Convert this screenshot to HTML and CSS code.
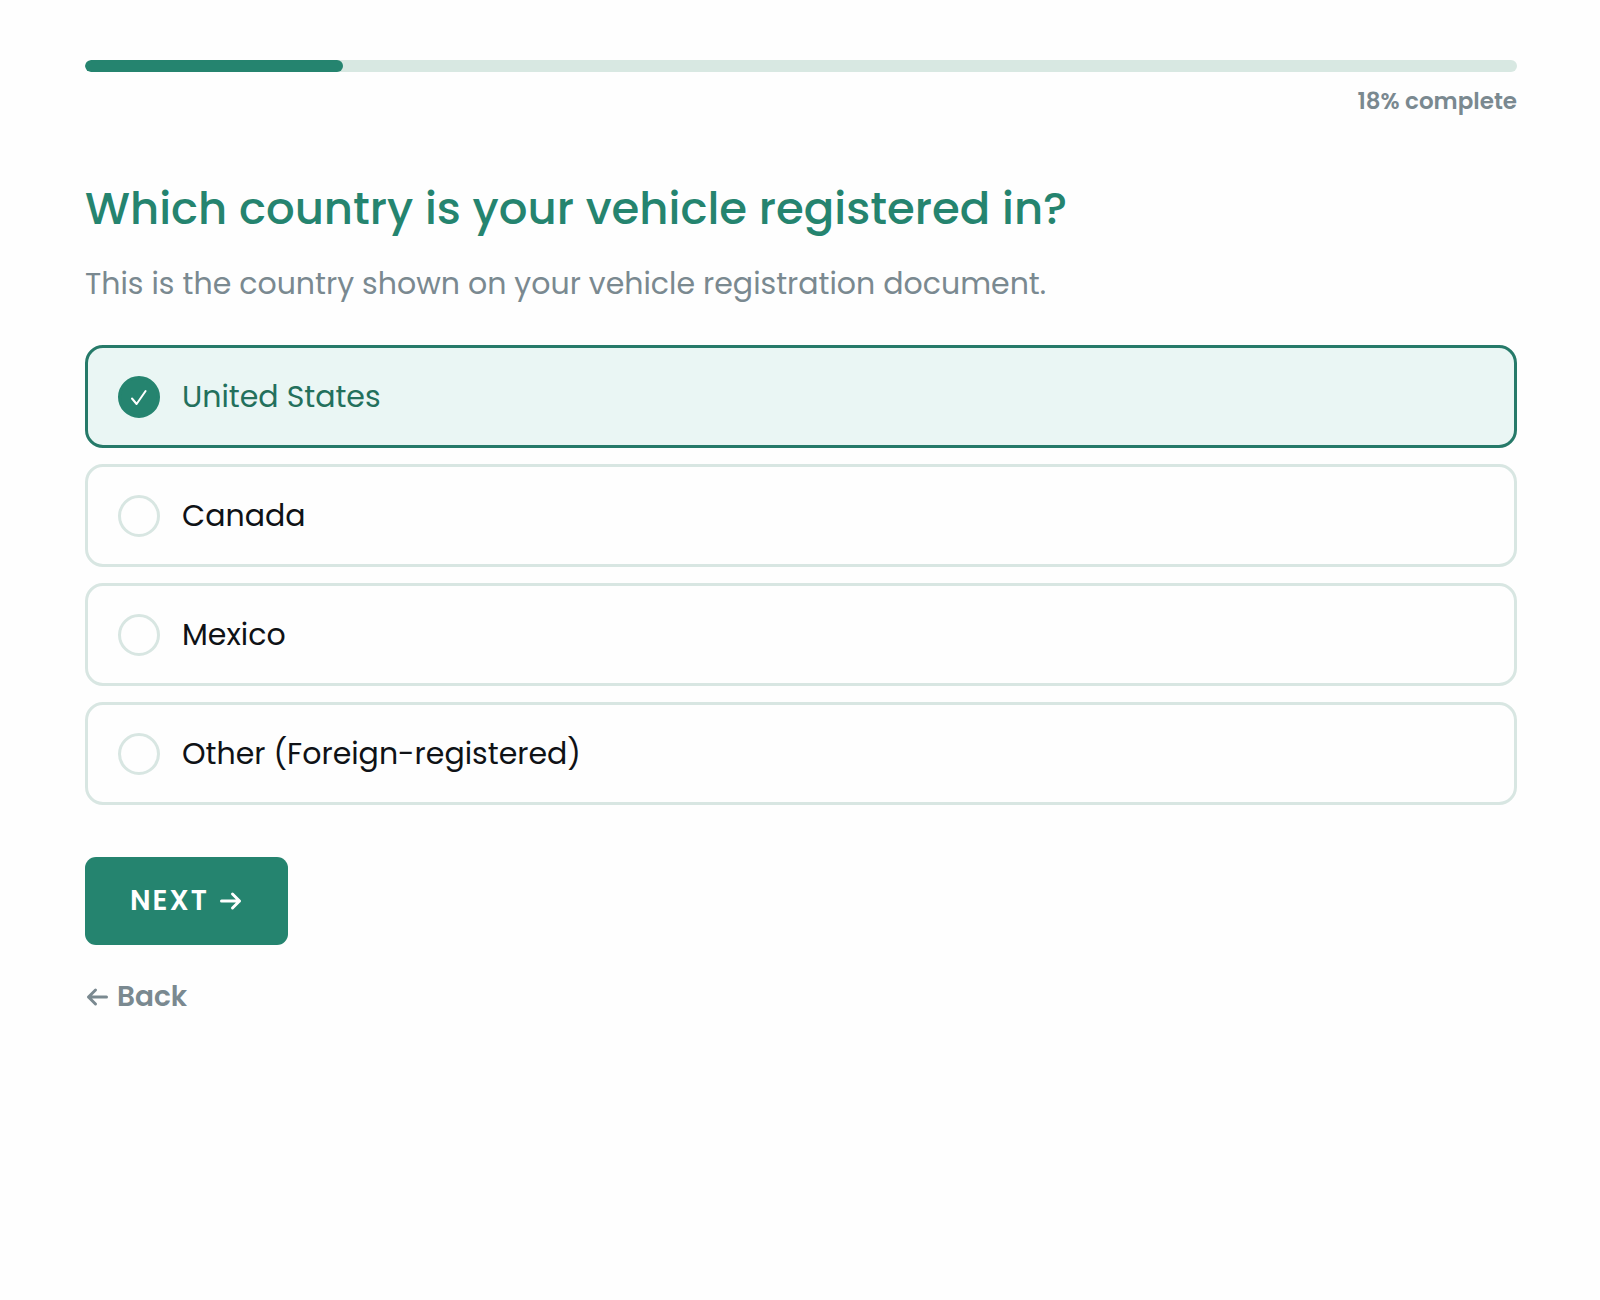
FILE: index.html
```html
<!DOCTYPE html>
<html lang="en">

<head>
    <meta charset="UTF-8">
    <meta name="viewport" content="width=device-width, initial-scale=1.0">
    <title>Vehicle registration</title>
    <link rel="stylesheet" href="styles.css">
</head>

<body>
    <form class="quiz" action="" autocomplete="off">
        <div class="progress">
            <div class="progress-bar" style="width: 18%"></div>
        </div>
        <p class="progress-text">18% complete</p>

        <h1 id="question">Which country is your vehicle registered in?</h1>
        <p class="hint">This is the country shown on your vehicle registration document.</p>

        <div class="options" role="radiogroup" aria-labelledby="question">
            <label class="option">
                <span class="radio">
                    <input type="radio" name="country" value="us" checked>
                    <svg class="check" viewBox="0 0 42 42"><path d="M14 22.500l4.600 5.500 9-13"/></svg>
                </span>
                <span>United States</span>
            </label>
            <label class="option">
                <span class="radio">
                    <input type="radio" name="country" value="ca">
                    <svg class="check" viewBox="0 0 42 42"><path d="M14 22.500l4.600 5.500 9-13"/></svg>
                </span>
                <span>Canada</span>
            </label>
            <label class="option">
                <span class="radio">
                    <input type="radio" name="country" value="mx">
                    <svg class="check" viewBox="0 0 42 42"><path d="M14 22.500l4.600 5.500 9-13"/></svg>
                </span>
                <span>Mexico</span>
            </label>
            <label class="option">
                <span class="radio">
                    <input type="radio" name="country" value="other">
                    <svg class="check" viewBox="0 0 42 42"><path d="M14 22.500l4.600 5.500 9-13"/></svg>
                </span>
                <span>Other (Foreign-registered)</span>
            </label>
        </div>

        <div class="actions">
            <button type="submit" class="next">
                NEXT
                <svg class="arrow" viewBox="0 0 24 24"><path d="M2.500 12h18M13.500 5l7 7-7 7"/></svg>
            </button>
            <a href="#" class="back">
                <svg class="arrow" viewBox="0 0 24 24"><path d="M21.500 12h-18M10.500 5l-7 7 7 7"/></svg>
                Back
            </a>
        </div>
    </form>
</body>

</html>
```

FILE: styles.css
```css
* {
    margin: 0;
    padding: 0;
    box-sizing: border-box;
}

body {
    background: #fefefe;
    color: #0f1216;
    font-family: "Poppins", "Inter", sans-serif;
}

.quiz {
    padding: 60px 83px 60px 85px;
}

/* progress */
.progress {
    height: 12px;
    border-radius: 6px;
    background: #d8e8e2;
    overflow: hidden;
}

.progress-bar {
    height: 100%;
    border-radius: 6px;
    background: #25846f;
}

.progress-text {
    margin-top: 12px;
    text-align: right;
    font-size: 23px;
    line-height: 34px;
    font-weight: 600;
    color: #7a8990;
}

/* question */
h1 {
    margin-top: 63px;
    font-size: 45px;
    line-height: 56px;
    font-weight: 500;
    color: #25846f;
}

.hint {
    margin-top: 24px;
    font-size: 30px;
    line-height: 46px;
    color: #7a8990;
}

.options {
    display: flex;
    flex-direction: column;
    gap: 16px;
    margin-top: 38px;
}

.option {
    display: flex;
    align-items: center;
    gap: 22px;
    min-height: 103px;
    padding: 25px 30px;
    border: 3px solid #d8e6e2;
    border-radius: 18px;
    font-size: 30px;
    line-height: 46px;
    cursor: pointer;
}

.option:has(input:checked) {
    border-color: #267a69;
    background: #eaf6f4;
    color: #23705c;
}

/* input and check share one grid cell */
.radio {
    display: grid;
}

.radio input,
.check {
    grid-area: 1 / 1;
    width: 42px;
    height: 42px;
}

.radio input {
    appearance: none;
    border: 3px solid #d8e6e2;
    border-radius: 50%;
    cursor: pointer;
}

.radio input:checked {
    border-color: #25846f;
    background: #25846f;
}

.check {
    display: none;
    fill: none;
    stroke: #fff;
    stroke-width: 2;
    stroke-linecap: round;
    stroke-linejoin: round;
    pointer-events: none;
}

.radio input:checked + .check {
    display: block;
}

/* buttons */
.actions {
    display: flex;
    flex-direction: column;
    align-items: flex-start;
    gap: 30px;
    margin-top: 52px;
}

.next {
    display: flex;
    align-items: center;
    gap: 10px;
    padding: 22px 45px;
    border: 0;
    border-radius: 11px;
    background: #25846f;
    color: #fff;
    font-family: inherit;
    font-size: 28px;
    line-height: 44px;
    font-weight: 600;
    letter-spacing: 2px;
    cursor: pointer;
}

.back {
    display: flex;
    align-items: center;
    gap: 8px;
    font-size: 28px;
    line-height: 44px;
    font-weight: 600;
    color: #7a8990;
    text-decoration: none;
}

.arrow {
    width: 24px;
    height: 24px;
    fill: none;
    stroke: currentColor;
    stroke-width: 3;
    stroke-linecap: round;
    stroke-linejoin: round;
}
```
